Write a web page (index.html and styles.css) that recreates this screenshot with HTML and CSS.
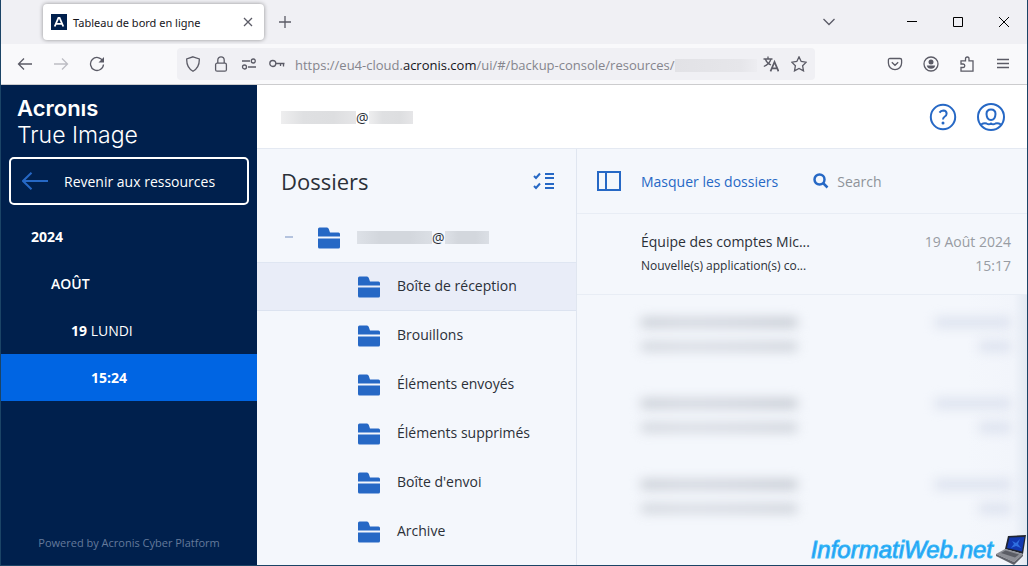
FILE: index.html
```html
<!DOCTYPE html>
<html lang="fr">
<head>
  <meta charset="UTF-8" />
  <meta name="viewport" content="width=device-width, initial-scale=1.0"/>
  <title>Tableau de bord en ligne</title>
  <link rel="stylesheet" href="styles.css">
</head>
<body>
  <svg width="0" height="0" class="defs" aria-hidden="true">
    <symbol id="folder" viewBox="0 0 22 22">
      <path d="M0 9.500V2Q0 .5 1.500 .5H9Q10.300 .5 10.800 2L12 5.500H20.500Q22 5.500 22 7V9.500Z"/>
      <path d="M0 11.500H22V20Q22 21.500 20.500 21.500H1.500Q0 21.500 0 20Z"/>
    </symbol>
  </svg>

  <div class="tab-bar">
    <div class="tab">
      <svg class="favicon" width="16" height="16" viewBox="0 0 16 16"><path fill="#00204d" d="M0 0h16v16H0z"/><path d="M3.700 12.500 7.400 4h1.200l3.700 8.500M5 9.800h6.400" fill="none" stroke="#fff" stroke-width="1.800"/></svg>
      <span class="tab-title">Tableau de bord en ligne</span>
      <button class="tab-close" aria-label="Fermer l'onglet"><svg width="10" height="10" viewBox="0 0 10 10"><path d="M1 1l8 8M9 1L1 9"/></svg></button>
    </div>
    <button class="icon-btn" aria-label="Nouvel onglet"><svg width="12" height="12" viewBox="0 0 12 12"><path d="M6 0v12M0 6h12"/></svg></button>
    <div class="window-controls">
      <button class="icon-btn tab-list" aria-label="Onglets"><svg width="12" height="8" viewBox="0 0 12 8"><path d="M.5 1 6 6.500 11.500 1"/></svg></button>
      <button class="win-btn" aria-label="Réduire"><svg width="10" height="10" viewBox="0 0 10 10"><path d="M0 4.500h10"/></svg></button>
      <button class="win-btn" aria-label="Agrandir"><svg width="10" height="10" viewBox="0 0 10 10"><path d="M.5 .5h9v9h-9z"/></svg></button>
      <button class="win-btn" aria-label="Fermer"><svg width="10" height="10" viewBox="0 0 10 10"><path d="M0 0l10 10M10 0L0 10"/></svg></button>
    </div>
  </div>

  <div class="nav-bar">
    <button class="icon-btn" aria-label="Précédent"><svg width="16" height="16" viewBox="0 0 16 16"><path d="M15 8H1.500M7 2.500 1.500 8 7 13.500"/></svg></button>
    <button class="icon-btn" aria-label="Suivant" disabled><svg width="16" height="16" viewBox="0 0 16 16"><path d="M1 8h13.500M9 2.500 14.500 8 9 13.500"/></svg></button>
    <button class="icon-btn" aria-label="Actualiser"><svg width="16" height="16" viewBox="0 0 16 16"><path d="M13.800 5A6.500 6.500 0 1 0 14.500 8.500"/><path class="solid" d="M15 1v5.500H9.500z"/></svg></button>

    <div class="url-bar">
      <button class="url-btn" aria-label="Protection"><svg width="16" height="16" viewBox="0 0 16 16"><path d="M8 .8 14.300 3Q14.600 11.500 8 15.300 1.400 11.500 1.700 3z"/></svg></button>
      <button class="url-btn" aria-label="Connexion sécurisée"><svg width="16" height="16" viewBox="0 0 16 16"><rect x="2.600" y="7.200" width="10.800" height="8" rx="1.500"/><path d="M4.800 7V4a3.200 3.200 0 0 1 6.400 0v3"/></svg></button>
      <button class="url-btn" aria-label="Autorisations"><svg width="16" height="16" viewBox="0 0 16 16"><path d="M1 5h8M7 11h8"/><circle cx="12.300" cy="5" r="2"/><circle cx="3.500" cy="11" r="2"/></svg></button>
      <button class="url-btn" aria-label="Mot de passe"><svg width="16" height="16" viewBox="0 0 16 16"><circle cx="3.800" cy="7.500" r="3"/><path d="M7 7.500h8.500M11.500 7.500v2.500M14.500 7.500v3"/></svg></button>
      <div class="url" role="textbox" aria-label="Adresse"><span>https://eu4-cloud.<b>acronis.com</b>/ui/#/backup-console/resources/</span><i class="url-hidden"></i></div>
      <button class="url-btn" aria-label="Traduire"><svg width="16" height="16" viewBox="0 0 16 16"><path d="M.5 3h9M5 .5V3M8 3Q6.500 8 .8 10.500M2.500 3.500Q4 7.500 8 9"/><path stroke-width="1.700" d="M7.500 15.300 11.500 6l4 9.300M9 12.300h5"/></svg></button>
      <button class="url-btn" aria-label="Marque-page"><svg width="16" height="16" viewBox="0 0 16 16"><path d="M8 .9 10.200 5.500 15.200 6.200 11.600 9.700 12.500 14.900 8 12.500 3.500 14.900 4.400 9.700 .8 6.200 5.800 5.500z"/></svg></button>
    </div>

    <button class="icon-btn" aria-label="Pocket"><svg width="16" height="16" viewBox="0 0 16 16"><path d="M3 2.500h10q1.600 0 1.600 1.600V7a6.600 6.600 0 0 1-13.200 0V4.100Q1.400 2.500 3 2.500zM4.800 6.300 8 9.300l3.200-3"/></svg></button>
    <button class="icon-btn" aria-label="Compte"><svg width="16" height="16" viewBox="0 0 16 16"><circle cx="8" cy="8" r="7"/><circle class="solid" cx="8" cy="6" r="2.500"/><path class="solid" d="M3.800 9.500h8.400Q11.500 12.800 8 12.800T3.800 9.500z"/></svg></button>
    <button class="icon-btn" aria-label="Extensions"><svg width="16" height="16" viewBox="0 0 16 16"><path d="M2 15.200V11.500H4.200Q5.800 11.500 5.800 9.800T4.200 8H2V4.800H6.500V3Q6.500 1 8.300 1T10 3v1.800h4v10.400z"/></svg></button>
    <button class="icon-btn" aria-label="Menu"><svg width="14" height="12" viewBox="0 0 14 12"><path d="M1 1.500h12M1 5.500h12M1 9.500h12"/></svg></button>
  </div>

  <div class="app">
    <aside class="sidebar">
      <div class="logo">
        <strong aria-label="Acronis">Acronıs</strong>
        <span>True Image</span>
      </div>
      <button class="back-btn">
        <svg width="26" height="18" viewBox="0 0 26 18"><path d="M26 9H1M9.500 .8 1 9l8.500 8.200"/></svg>
        Revenir aux ressources
      </button>
      <nav class="dates">
        <a href="#" class="year"><b>2024</b></a>
        <a href="#" class="month">AOÛT</a>
        <a href="#" class="day"><b>19</b> LUNDI</a>
        <a href="#" class="hour active"><b>15:24</b></a>
      </nav>
      <div class="powered">Powered by Acronis Cyber Platform</div>
    </aside>

    <main class="content">
      <header class="header">
        <div class="account"><i class="hidden-name"></i>@<i class="hidden-domain"></i></div>
        <div class="header-actions">
          <button class="round-btn" aria-label="Aide"><svg width="28" height="28" viewBox="0 0 28 28"><circle cx="14" cy="14" r="12.200"/><path d="M10.500 9.600Q11.800 7.500 14.300 7.500 17.700 7.700 17.600 10.700 17.500 12.500 15.800 13.500 14 14.700 14 16.600"/><circle class="dot" cx="14" cy="20" r="1.500"/></svg></button>
          <button class="round-btn" aria-label="Profil"><svg width="28" height="28" viewBox="0 0 28 28"><circle cx="14" cy="14" r="13"/><path d="M14 6.500Q18.500 6.500 18.500 11 18.200 17 14 17T9.500 11Q9.500 6.500 14 6.500zM4 21.500Q7 19.800 9.500 20.500 12 22 14 20.500 16 22 18.500 20.500 21 19.800 24 21.500"/></svg></button>
        </div>
      </header>

      <div class="panes">
        <section class="folders">
          <div class="folders-head">
            <h1>Dossiers</h1>
            <button class="plain-btn" aria-label="Tout sélectionner"><svg width="22" height="18" viewBox="0 0 22 18"><path d="M1 4 3 6 7 1.500M1 14 3 16 7 11.500"/><path d="M12 2h9M12 6h9M12 12h9M12 16h9"/></svg></button>
          </div>
          <ul class="tree">
            <li><button class="folder root"><i class="collapse"></i><svg><use href="#folder"/></svg><span class="account"><i class="hidden-name"></i>@<i class="hidden-domain"></i></span></button></li>
            <li><button class="folder active"><svg><use href="#folder"/></svg>Boîte de réception</button></li>
            <li><button class="folder"><svg><use href="#folder"/></svg>Brouillons</button></li>
            <li><button class="folder"><svg><use href="#folder"/></svg>Éléments envoyés</button></li>
            <li><button class="folder"><svg><use href="#folder"/></svg>Éléments supprimés</button></li>
            <li><button class="folder"><svg><use href="#folder"/></svg>Boîte d'envoi</button></li>
            <li><button class="folder"><svg><use href="#folder"/></svg>Archive</button></li>
          </ul>
        </section>

        <section class="mails">
          <div class="mails-head">
            <button class="hide-btn"><svg width="24" height="20" viewBox="0 0 24 20"><path d="M1 1h22v18H1zM9 1v18"/></svg>Masquer les dossiers</button>
            <label class="search"><svg width="16" height="16" viewBox="0 0 16 16"><circle cx="6.500" cy="6.500" r="5"/><path d="M10 10l4.500 4.500"/></svg><input type="search" placeholder="Search" aria-label="Search"></label>
          </div>
          <ul class="mail-list">
            <li class="mail">
              <div class="line"><span class="from">Équipe des comptes Mic...</span><time>19 Août 2024</time></div>
              <div class="line"><span class="subject">Nouvelle(s) application(s) co...</span><time>15:17</time></div>
            </li>
            <li class="mail masked">
              <div class="line"><i class="bar"></i><i class="bar date"></i></div>
              <div class="line"><i class="bar light"></i><i class="bar time"></i></div>
            </li>
            <li class="mail masked">
              <div class="line"><i class="bar"></i><i class="bar date"></i></div>
              <div class="line"><i class="bar light"></i><i class="bar time"></i></div>
            </li>
            <li class="mail masked">
              <div class="line"><i class="bar"></i><i class="bar date"></i></div>
              <div class="line"><i class="bar light"></i><i class="bar time"></i></div>
            </li>
            <li class="masked rest"></li>
          </ul>
        </section>
      </div>
    </main>
  </div>

  <div class="watermark">
    <span>InformatiWeb.net</span>
    <svg width="32" height="30" viewBox="0 0 32 30">
      <path fill="#202532" d="M13 1 31 0 28 19 10 14z"/>
      <path fill="#1238b0" d="M14.500 2.500 29.500 2 27 16.500 12 13z"/>
      <path fill="#2f6fe0" d="M17 6l4 2 4-4-2 5 3 4-5-2-5 2 3-4z"/>
      <path fill="#8d8f96" d="M10 14 28 19 19 27 1 19z"/>
      <path fill="#5b5d65" d="M10.500 15.500 24 19.500 20 22.500 6 18z"/>
      <path fill="#5f6169" d="M1 19 19 27 28 19V21L19 30 1 21z"/>
    </svg>
  </div>
</body>
</html>
```

FILE: styles.css
```css
* {
  box-sizing: border-box;
}

body {
  margin: 0;
  height: 100vh;
  display: flex;
  flex-direction: column;
  position: relative;
  overflow: hidden;
  border: 1px solid #1b4466;
  border-top: none;
  font-family: "Open Sans", "Noto Sans", sans-serif;
  font-size: 14px;
  color: #2b3038;
  background-color: #f4f7fc;
}

button {
  font: inherit;
  color: inherit;
  border: none;
  background: none;
  padding: 0;
  cursor: pointer;
  display: flex;
  align-items: center;
  justify-content: center;
}

svg {
  flex: none;
  fill: none;
}

ul {
  list-style: none;
  margin: 0;
  padding: 0;
}

.defs {
  position: absolute;
}

/* browser window */
.tab-bar {
  flex: none;
  height: 44px;
  display: flex;
  align-items: center;
  background-color: #f0f0f4;
  padding-left: 42px;
}

.tab {
  width: 221px;
  height: 36px;
  display: flex;
  align-items: center;
  padding: 0 6px 0 8px;
  margin-right: 3px;
  background-color: #fff;
  border-radius: 4px;
  box-shadow: 0 0 4px rgba(0, 0, 0, 0.4);
}

.tab-title {
  flex: 1;
  margin-left: 6px;
  font-family: "Noto Sans", "Open Sans", sans-serif;
  font-size: 11px;
  color: #15141a;
  white-space: nowrap;
}

.tab-close {
  width: 20px;
  height: 20px;
}

.icon-btn,
.url-btn,
.tab-close {
  stroke: #5b5b66;
  stroke-width: 1.3;
}

.icon-btn {
  flex: none;
  width: 36px;
  height: 32px;
}

.icon-btn:disabled {
  stroke: #bdbdc3;
}

.solid {
  fill: #5b5b66;
  stroke: none;
}

.window-controls {
  display: flex;
  align-items: center;
  margin-left: auto;
}

.tab-list {
  margin-right: 42px;
}

.win-btn {
  width: 46px;
  height: 32px;
  stroke: #000;
  stroke-width: 1;
}

.nav-bar {
  flex: none;
  height: 41px;
  display: flex;
  align-items: center;
  padding: 0 6px;
  background-color: #f9f9fb;
  border-bottom: 1px solid #ccccce;
}

.url-bar {
  flex: 1;
  min-width: 0;
  height: 32px;
  margin: 0 62px;
  padding: 0 2px;
  display: flex;
  align-items: center;
  background-color: #f0f0f4;
  border-radius: 4px;
}

.url-btn {
  flex: none;
  width: 28px;
  height: 28px;
}

.url {
  flex: 1;
  min-width: 0;
  display: flex;
  align-items: center;
  margin-left: 4px;
  overflow: hidden;
  white-space: nowrap;
  font-size: 13px;
  line-height: 20px;
  padding-top: 2px;
  color: #85858d;
}

.url b {
  font-weight: 400;
  color: #15141a;
}

.url-hidden {
  flex: 1;
  height: 13px;
  background: linear-gradient(90deg, #e2e2e6, #e6e6ea 80%, #ededf1);
}

/* application */
.app {
  flex: 1;
  min-height: 0;
  display: flex;
}

.sidebar {
  flex: none;
  width: 256px;
  display: flex;
  flex-direction: column;
  background-color: #00204d;
  color: #fff;
}

.logo {
  display: flex;
  flex-direction: column;
  height: 72px;
  padding: 10px 16px 0;
  font-family: Inter, "Open Sans", sans-serif;
  font-size: 22px;
  line-height: 26px;
}

.logo strong {
  font-weight: 600;
}

.logo span {
  font-size: 23px;
  line-height: 28px;
  font-weight: 300;
}

.back-btn {
  flex: none;
  height: 48px;
  margin: 0 8px 8px;
  padding: 0 11px;
  gap: 16px;
  justify-content: flex-start;
  border: 2px solid #fff;
  border-radius: 5px;
}

.back-btn svg {
  stroke: #2668c5;
  stroke-width: 2;
}

.dates a {
  display: block;
  line-height: 47px;
  color: #fff;
  text-decoration: none;
}

.dates .year {
  padding-left: 30px;
}

.dates .month {
  padding-left: 50px;
  font-weight: 600;
}

.dates .day {
  padding-left: 70px;
}

.dates .hour {
  padding-left: 90px;
}

.dates .active {
  background-color: #0065e3;
}

.powered {
  margin-top: auto;
  padding-bottom: 14px;
  text-align: center;
  font-size: 11px;
  line-height: 16px;
  color: #647a9b;
}

.content {
  flex: 1;
  min-width: 0;
  display: flex;
  flex-direction: column;
}

.header {
  flex: none;
  height: 64px;
  display: flex;
  align-items: center;
  justify-content: space-between;
  padding: 0 22px 0 24px;
  background-color: #fff;
  border-bottom: 1px solid #e4e9f2;
}

.account {
  display: flex;
  align-items: center;
  font-size: 14px;
  line-height: 20px;
  padding-top: 2px;
}

.hidden-name,
.hidden-domain {
  height: 13px;
  background: linear-gradient(90deg, #eeeeef, #dfe0e2 30%, #dddee0 70%, #e6e6e8);
}

.hidden-name {
  width: 75px;
}

.hidden-domain {
  width: 44px;
}

.folder .hidden-name,
.folder .hidden-domain {
  background: linear-gradient(90deg, #dde1e7, #d3d7dd 30%, #d3d7dd 70%, #dbdfe5);
}

.header-actions {
  display: flex;
  gap: 20px;
}

.round-btn,
.plain-btn,
.hide-btn,
.search {
  stroke: #2668c5;
  stroke-width: 2;
}

.dot {
  fill: #2668c5;
  stroke: none;
}

.panes {
  flex: 1;
  min-height: 0;
  display: flex;
}

.folders {
  flex: none;
  width: 320px;
  border-right: 1px solid #e0e6f0;
}

.folders-head {
  height: 64px;
  display: flex;
  align-items: center;
  justify-content: space-between;
  padding: 0 21px 0 24px;
}

.folders-head h1 {
  margin: 0;
  font-size: 22px;
  font-weight: 400;
}

.folder {
  width: 100%;
  height: 49px;
  padding: 0 0 2px 101px;
  gap: 17px;
  justify-content: flex-start;
}

.folder svg {
  width: 22px;
  height: 22px;
  margin-top: 2px;
  fill: #2668c5;
}

.folder.root {
  padding-left: 28px;
}

.folder.active {
  background-color: #e9edf8;
  box-shadow: inset 0 -1px #dce3f0, inset 0 1px #dfe6f2;
}

.collapse {
  width: 8px;
  height: 2px;
  margin-right: 8px;
  background-color: #b4c3de;
}

.mails {
  flex: 1;
  min-width: 0;
  display: flex;
  flex-direction: column;
}

.mails-head {
  flex: none;
  height: 65px;
  display: flex;
  align-items: center;
  gap: 35px;
  padding: 0 16px 0 20px;
  border-bottom: 1px solid #e8edf5;
}

.hide-btn {
  gap: 20px;
  color: #2668c5;
  white-space: nowrap;
}

.search {
  flex: 1;
  display: flex;
  align-items: center;
  gap: 8px;
}

.search svg {
  stroke-width: 2.5;
}

.search input {
  flex: 1;
  min-width: 0;
  padding: 0;
  border: none;
  outline: none;
  background: none;
  font: inherit;
}

.search input::placeholder {
  color: #8e9399;
}

.mail-list {
  flex: 1;
  min-height: 0;
  display: flex;
  flex-direction: column;
  overflow: hidden;
}

.mail {
  flex: none;
  padding: 15px 16px 17px 64px;
  border-bottom: 1px solid #e8edf5;
}

.line {
  height: 24px;
  display: flex;
  align-items: center;
  justify-content: space-between;
}

.line time {
  color: #989ca3;
}

.subject {
  font-size: 12px;
}

.masked {
  border-bottom-color: transparent;
  background: linear-gradient(270deg, #e3e9f2, #f2f5fb 14px, #f4f7fc 60px);
}

.rest {
  flex: 1;
}

.bar {
  width: 156px;
  height: 9px;
  background: linear-gradient(90deg, #c3c8d0, #ccd0d8 30%, #c8ccd5 60%, #bfc4cc);
  filter: blur(6px);
}

.bar.light {
  opacity: 0.8;
}

.bar.date {
  width: 76px;
  background: #d8deec;
}

.bar.time {
  width: 32px;
  background: #d8deec;
}

/* site mark laid over the bottom corner */
.watermark {
  position: absolute;
  right: 0;
  bottom: 0;
  display: flex;
  align-items: center;
  gap: 2px;
  font-family: "Liberation Sans", sans-serif;
  font-size: 24px;
  font-style: italic;
  color: #2196f3;
  -webkit-text-stroke: 1px #35b8f7;
}
```
